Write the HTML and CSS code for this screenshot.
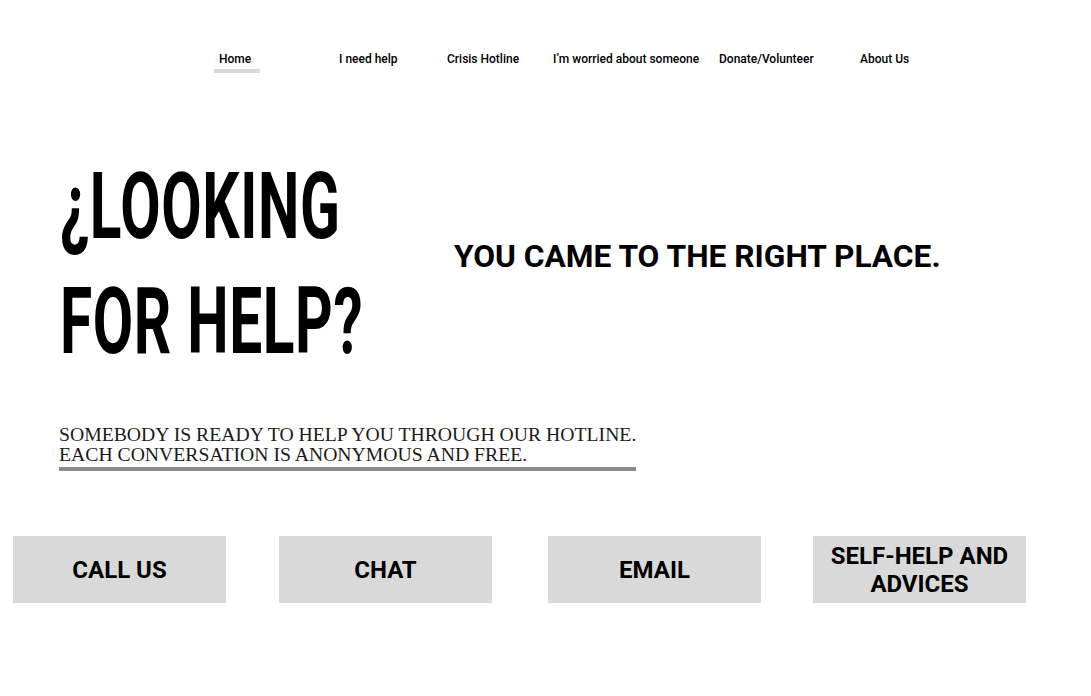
FILE: index.html
```html
<!DOCTYPE html>
<html lang="en">
<head>
<meta charset="utf-8">
<title>Looking for help?</title>
<link rel="stylesheet" href="styles.css">
</head>
<body>
<nav class="nav">
  <a class="nav-item nav-home active" href="#">Home</a>
  <a class="nav-item nav-help" href="#">I need help</a>
  <a class="nav-item nav-crisis" href="#">Crisis Hotline</a>
  <a class="nav-item nav-worried" href="#">I’m worried about someone</a>
  <a class="nav-item nav-donate" href="#">Donate/Volunteer</a>
  <a class="nav-item nav-about" href="#">About Us</a>
</nav>
<section class="hero">
  <div class="hero-left">
    <h1 class="hero-title">¿LOOKING<br>FOR HELP?</h1>
  </div>
  <div class="hero-right">
    <p class="hero-tag">YOU CAME TO THE RIGHT PLACE.</p>
  </div>
</section>
<section class="intro">
  <p class="intro-text">SOMEBODY IS READY TO HELP YOU THROUGH OUR HOTLINE.<br>EACH CONVERSATION IS ANONYMOUS AND FREE.</p>
  <div class="intro-bar"></div>
</section>
<section class="actions">
  <a class="action" href="#">CALL US</a>
  <a class="action" href="#">CHAT</a>
  <a class="action" href="#">EMAIL</a>
  <a class="action" href="#">SELF-HELP AND<br>ADVICES</a>
</section>
</body>
</html>
```
FILE: styles.css
```css
* { box-sizing: border-box; }
html, body { margin: 0; padding: 0; background: #fff; }
body {
  width: 1091px;
  height: 696px;
  overflow: hidden;
  font-family: Roboto, "Liberation Sans", sans-serif;
  color: #000;
}
a { color: inherit; text-decoration: none; }

.nav {
  display: flex;
  align-items: flex-start;
  padding: 52px 0 0 214px;
  height: 96px;
}
.nav-item {
  font-size: 12px;
  font-weight: 500;
  line-height: 14px;
  display: flex;
  flex-direction: column;
  align-items: flex-start;
}
.nav-home { width: 125px; padding-left: 5px; }
.nav-help { width: 108px; }
.nav-crisis { width: 106px; }
.nav-worried { width: 166px; }
.nav-donate { width: 141px; }
.active::after {
  content: "";
  display: block;
  width: 46px;
  height: 4px;
  margin: 3px 0 0 -5px;
  background: #d9d9d9;
}

.hero {
  display: flex;
  align-items: center;
  padding: 53px 0 0 60px;
}
.hero-left { width: 394px; flex: none; }
.hero-title {
  margin: 0;
  font-family: Roboto, sans-serif;
  font-weight: 700;
  font-size: 93px;
  line-height: 115px;
  letter-spacing: 1px;
  transform: scaleX(0.63);
  transform-origin: left center;
  white-space: nowrap;
}
.hero-right { padding-bottom: 14px; }
.hero-tag {
  margin: 0;
  font-family: Roboto, sans-serif;
  font-weight: 700;
  font-size: 31.7px;
  line-height: 36px;
}

.intro {
  padding: 45px 0 0 59px;
}
.intro-text {
  margin: 0;
  font-family: "Liberation Serif", "Times New Roman", serif;
  font-size: 19.7px;
  line-height: 20px;
  color: #1a1a1a;
}
.intro-bar {
  width: 577px;
  height: 4px;
  margin-top: 3px;
  background: #8c8c8c;
}

.actions {
  display: flex;
  gap: 53px;
  padding: 65px 0 0 13px;
}
.action {
  width: 213px;
  height: 67px;
  flex: none;
  background: #d9d9d9;
  display: flex;
  align-items: center;
  justify-content: center;
  text-align: center;
  font-family: Roboto, sans-serif;
  font-weight: 700;
  font-size: 24px;
  line-height: 28px;
}
.action:nth-child(2) { margin-right: 3px; }
.action:nth-child(3) { margin-right: -1px; }
```
